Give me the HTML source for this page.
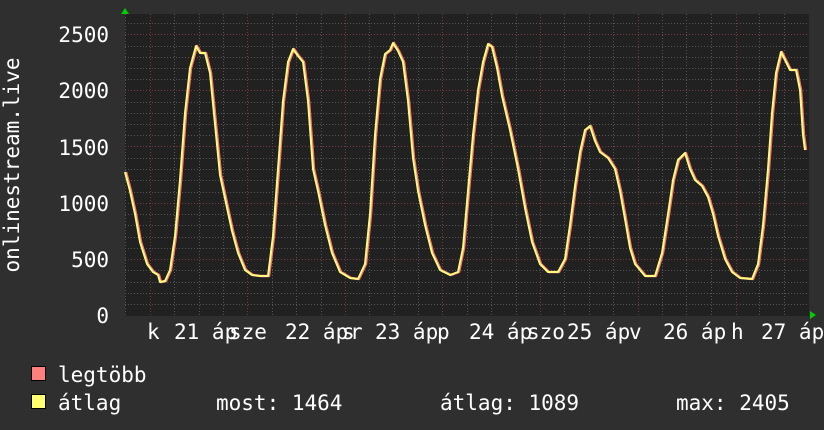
<!DOCTYPE html>
<html><head><meta charset="utf-8"><style>
html,body{margin:0;padding:0;background:#2f2f2f;}
svg{display:block}
text{font-family:"DejaVu Sans Mono","Liberation Mono",monospace;font-size:21px;fill:#fff}
</style></head><body>
<svg width="824" height="430" viewBox="0 0 824 430" xmlns="http://www.w3.org/2000/svg">
<rect width="824" height="430" fill="#2f2f2f"/>
<rect x="125" y="14" width="684" height="302" fill="#212121"/>
<g stroke="#555" stroke-width="1" stroke-dasharray="1,2">
<path d="M125.5 14V316M174.5 14V316M199.5 14V316M223.5 14V316M272.5 14V316M296.5 14V316M321.5 14V316M369.5 14V316M394.5 14V316M418.5 14V316M467.5 14V316M491.5 14V316M516.5 14V316M564.5 14V316M589.5 14V316M613.5 14V316M662.5 14V316M686.5 14V316M711.5 14V316M759.5 14V316M784.5 14V316"/>
<path d="M125 304.5H809M125 293.5H809M125 282.5H809M125 270.5H809M125 248.5H809M125 237.5H809M125 225.5H809M125 214.5H809M125 192.5H809M125 180.5H809M125 169.5H809M125 158.5H809M125 135.5H809M125 124.5H809M125 113.5H809M125 102.5H809M125 79.5H809M125 68.5H809M125 57.5H809M125 46.5H809M125 23.5H809"/>
</g>
<g stroke="#7a3a3a" stroke-width="1" stroke-dasharray="1,2">
<path d="M150.5 14V316M247.5 14V316M345.5 14V316M442.5 14V316M540.5 14V316M638.5 14V316M736.5 14V316"/>
<path d="M125 259.5H809M125 203.5H809M125 146.5H809M125 90.5H809M125 34.5H809"/>
</g>
<polygon points="125,8 121,14 129,14" fill="#0c0"/>
<polygon points="816,315 810,311 810,319" fill="#0c0"/>
<g fill="none" stroke-linejoin="round">
<polyline transform="translate(1,0)" stroke="#ff7070" stroke-width="2.5" points="125,172 130,191 135,214 140,242 147,264 153,272 158,275 160,282 165,281 170,270 175,236 180,180 185,113 190,68 196,46 200,53 205,53 210,73 215,124 220,175 226,203 232,231 238,253 245,270 252,275 260,276 268,276 273,236 278,169 283,101 288,62 293,49 298,56 303,62 308,101 313,169 318,191 325,225 332,253 340,272 350,278 358,279 365,264 370,214 375,135 380,79 385,54 390,50 393,43 398,51 403,62 408,101 413,158 418,191 425,225 432,253 440,270 450,275 458,272 463,248 468,191 473,135 478,90 483,62 488,44 492,47 497,68 502,96 510,130 518,169 525,208 532,242 540,264 548,272 558,272 565,259 570,225 575,186 580,152 585,130 590,126 595,141 600,152 608,158 615,169 620,191 625,219 630,248 635,264 645,276 655,276 662,253 668,214 673,180 678,160 685,153 690,169 695,180 702,186 708,197 713,214 718,236 725,259 732,272 740,278 752,279 758,264 763,225 768,169 772,113 776,73 781,52 786,62 790,70 796,70 800,90 803,135 805,150"/>
<polyline stroke="#ffff80" stroke-width="2" points="125,172 130,191 135,214 140,242 147,264 153,272 158,275 160,282 165,281 170,270 175,236 180,180 185,113 190,68 196,46 200,53 205,53 210,73 215,124 220,175 226,203 232,231 238,253 245,270 252,275 260,276 268,276 273,236 278,169 283,101 288,62 293,49 298,56 303,62 308,101 313,169 318,191 325,225 332,253 340,272 350,278 358,279 365,264 370,214 375,135 380,79 385,54 390,50 393,43 398,51 403,62 408,101 413,158 418,191 425,225 432,253 440,270 450,275 458,272 463,248 468,191 473,135 478,90 483,62 488,44 492,47 497,68 502,96 510,130 518,169 525,208 532,242 540,264 548,272 558,272 565,259 570,225 575,186 580,152 585,130 590,126 595,141 600,152 608,158 615,169 620,191 625,219 630,248 635,264 645,276 655,276 662,253 668,214 673,180 678,160 685,153 690,169 695,180 702,186 708,197 713,214 718,236 725,259 732,272 740,278 752,279 758,264 763,225 768,169 772,113 776,73 781,52 786,62 790,70 796,70 800,90 803,135 805,150"/>
</g>
<g text-anchor="end">
<text x="109" y="42">2500</text>
<text x="109" y="98">2000</text>
<text x="109" y="155">1500</text>
<text x="109" y="211">1000</text>
<text x="109" y="267">500</text>
<text x="109" y="323">0</text>
</g>
<text transform="translate(19,165) rotate(-90)" text-anchor="middle">onlinestream.live</text>
<g>
<text x="147" y="339">k</text>
<text x="174" y="339">21 áp</text>
<text x="229" y="339">sze</text>
<text x="285" y="339">22 áp</text>
<text x="342" y="339">s</text>
<text x="350" y="339">r</text>
<text x="375" y="339">23 áp</text>
<text x="437" y="339">p</text>
<text x="469" y="339">24 áp</text>
<text x="527" y="339">szo</text>
<text x="567" y="339">25 áp</text>
<text x="629" y="339">v</text>
<text x="663" y="339">26 áp</text>
<text x="731" y="339">h</text>
<text x="761" y="339">27 áp</text>
</g>
<rect x="31.5" y="366.5" width="14" height="14" fill="#ff7f7f" stroke="#000" stroke-width="1"/>
<rect x="31.5" y="394.5" width="14" height="14" fill="#ffff70" stroke="#000" stroke-width="1"/>
<text x="58" y="382">legtöbb</text>
<text x="58" y="410">átlag</text>
<text x="216" y="410">most: 1464</text>
<text x="440" y="410">átlag: 1089</text>
<text x="676" y="410">max: 2405</text>
</svg>
</body></html>
